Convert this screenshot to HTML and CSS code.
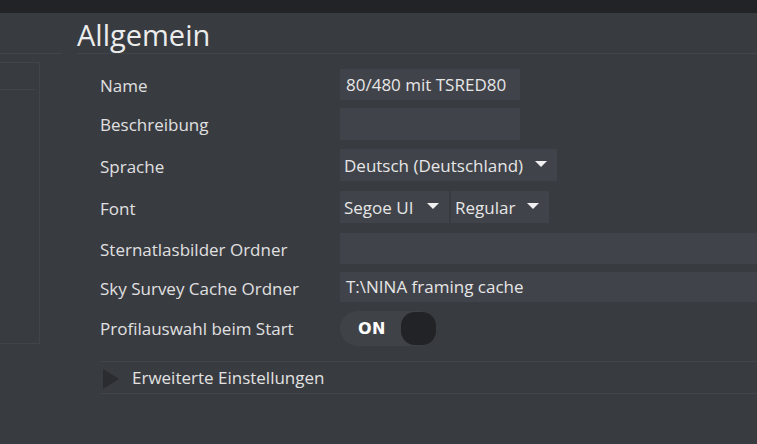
FILE: index.html
```html
<!DOCTYPE html>
<html lang="de">
<head>
<meta charset="utf-8">
<link rel="stylesheet" href="styles.css">
</head>
<body>
<div class="topbar"></div>
<div class="layout">
  <aside class="side">
    <div class="side-head"></div>
    <div class="side-box">
      <div class="side-line"></div>
    </div>
  </aside>
  <main class="main">
    <h1 class="title">Allgemein</h1>
    <div class="form">
      <div class="row r1">
        <span class="label">Name</span>
        <div class="input w180">80/480 mit TSRED80</div>
      </div>
      <div class="row r2">
        <span class="label">Beschreibung</span>
        <div class="input w180"></div>
      </div>
      <div class="row r3">
        <span class="label">Sprache</span>
        <div class="combo w217"><span>Deutsch (Deutschland)</span><i class="caret"></i></div>
      </div>
      <div class="row r4">
        <span class="label">Font</span>
        <div class="combos">
          <div class="combo w109"><span>Segoe UI</span><i class="caret"></i></div>
          <div class="combo w98"><span>Regular</span><i class="caret"></i></div>
        </div>
      </div>
      <div class="row r5">
        <span class="label">Sternatlasbilder Ordner</span>
        <div class="input wide"></div>
      </div>
      <div class="row r6">
        <span class="label">Sky Survey Cache Ordner</span>
        <div class="input wide">T:\NINA framing cache</div>
      </div>
      <div class="row r7">
        <span class="label">Profilauswahl beim Start</span>
        <div class="toggle"><span class="on">ON</span><span class="knob"></span></div>
      </div>
    </div>
    <div class="expander">
      <i class="tri"></i><span>Erweiterte Einstellungen</span>
    </div>
  </main>
</div>
</body>
</html>
```
FILE: styles.css
```css
html, body {
  margin: 0;
  padding: 0;
}
body {
  width: 757px;
  height: 444px;
  overflow: hidden;
  background: #383b40;
  color: #e2e2e2;
  font-family: "Open Sans", "Noto Sans", sans-serif;
}
.topbar {
  height: 13px;
  background: #222327;
}
.layout {
  display: grid;
  grid-template-columns: 62px 1fr;
  column-gap: 15px;
}
.side-head {
  height: 40px;
  border-bottom: 1px solid #41444a;
}
.side-box {
  margin-top: 8px;
  width: 39px;
  height: 280px;
  border-top: 1px solid #41444a;
  border-right: 1px solid #41444a;
  border-bottom: 1px solid #41444a;
}
.side-line {
  margin-top: 26px;
  width: 35px;
  border-top: 1px solid #41444a;
}
.main {
  min-width: 0;
}
.title {
  margin: 0;
  box-sizing: border-box;
  height: 41px;
  font-size: 29px;
  font-weight: 400;
  line-height: 44px;
  color: #ececec;
  border-bottom: 1px solid #41444a;
}
.form {
  padding: 15px 0 0 23px;
  display: grid;
  grid-template-columns: 240px 1fr;
  grid-template-rows: 39px 41px 42px 42px 39px 39px 35px;
}
.row {
  display: contents;
}
.label {
  font-size: 17px;
  line-height: 31px;
  padding-top: 1px;
  align-self: start;
  white-space: nowrap;
  color: #e0e0e0;
}
.input, .combo {
  box-sizing: border-box;
  height: 31px;
  background: #404349;
  font-size: 17px;
  line-height: 31px;
  padding: 0 6px;
  white-space: nowrap;
  color: #e6e6e6;
}
.r2 .input, .r3 .combo, .r4 .combo { height: 32px; }
.r3 .label, .r4 .label { line-height: 33px; }
.r6 .input { height: 30px; line-height: 30px; }
.r7 .label { line-height: 35px; padding-top: 0; }
.w180 { width: 180px; }
.w217 { width: 217px; }
.w109 { width: 109px; }
.w98 { width: 98px; }
.wide { width: 100%; }
.combos {
  display: flex;
  gap: 2px;
}
.combo {
  display: flex;
  align-items: center;
  justify-content: space-between;
  padding: 0 10px 0 4px;
}
.caret {
  width: 0;
  height: 0;
  border-left: 6px solid transparent;
  border-right: 6px solid transparent;
  border-top: 6px solid #f0f0f0;
  margin-top: -2px;
}
.toggle {
  box-sizing: border-box;
  width: 96px;
  height: 35px;
  background: #3f4247;
  border-radius: 18px;
  display: flex;
  align-items: center;
  justify-content: space-between;
  padding: 0 0 0 18px;
}
.on {
  font-family: "DejaVu Sans", "Open Sans", sans-serif;
  font-weight: 700;
  font-size: 16px;
  color: #ffffff;
  letter-spacing: 0.3px;
}
.knob {
  width: 35px;
  height: 33px;
  border-radius: 14px;
  background: #222327;
}
.expander {
  margin: 15px 0 0 23px;
  height: 31px;
  border-top: 1px solid #41444a;
  border-bottom: 1px solid #41444a;
  display: flex;
  align-items: center;
  font-size: 17px;
  color: #e2e2e2;
}
.tri {
  width: 0;
  height: 0;
  border-top: 10px solid transparent;
  border-bottom: 10px solid transparent;
  border-left: 16px solid #2a2c30;
  margin: 2px 13px 0 3px;
}
```
